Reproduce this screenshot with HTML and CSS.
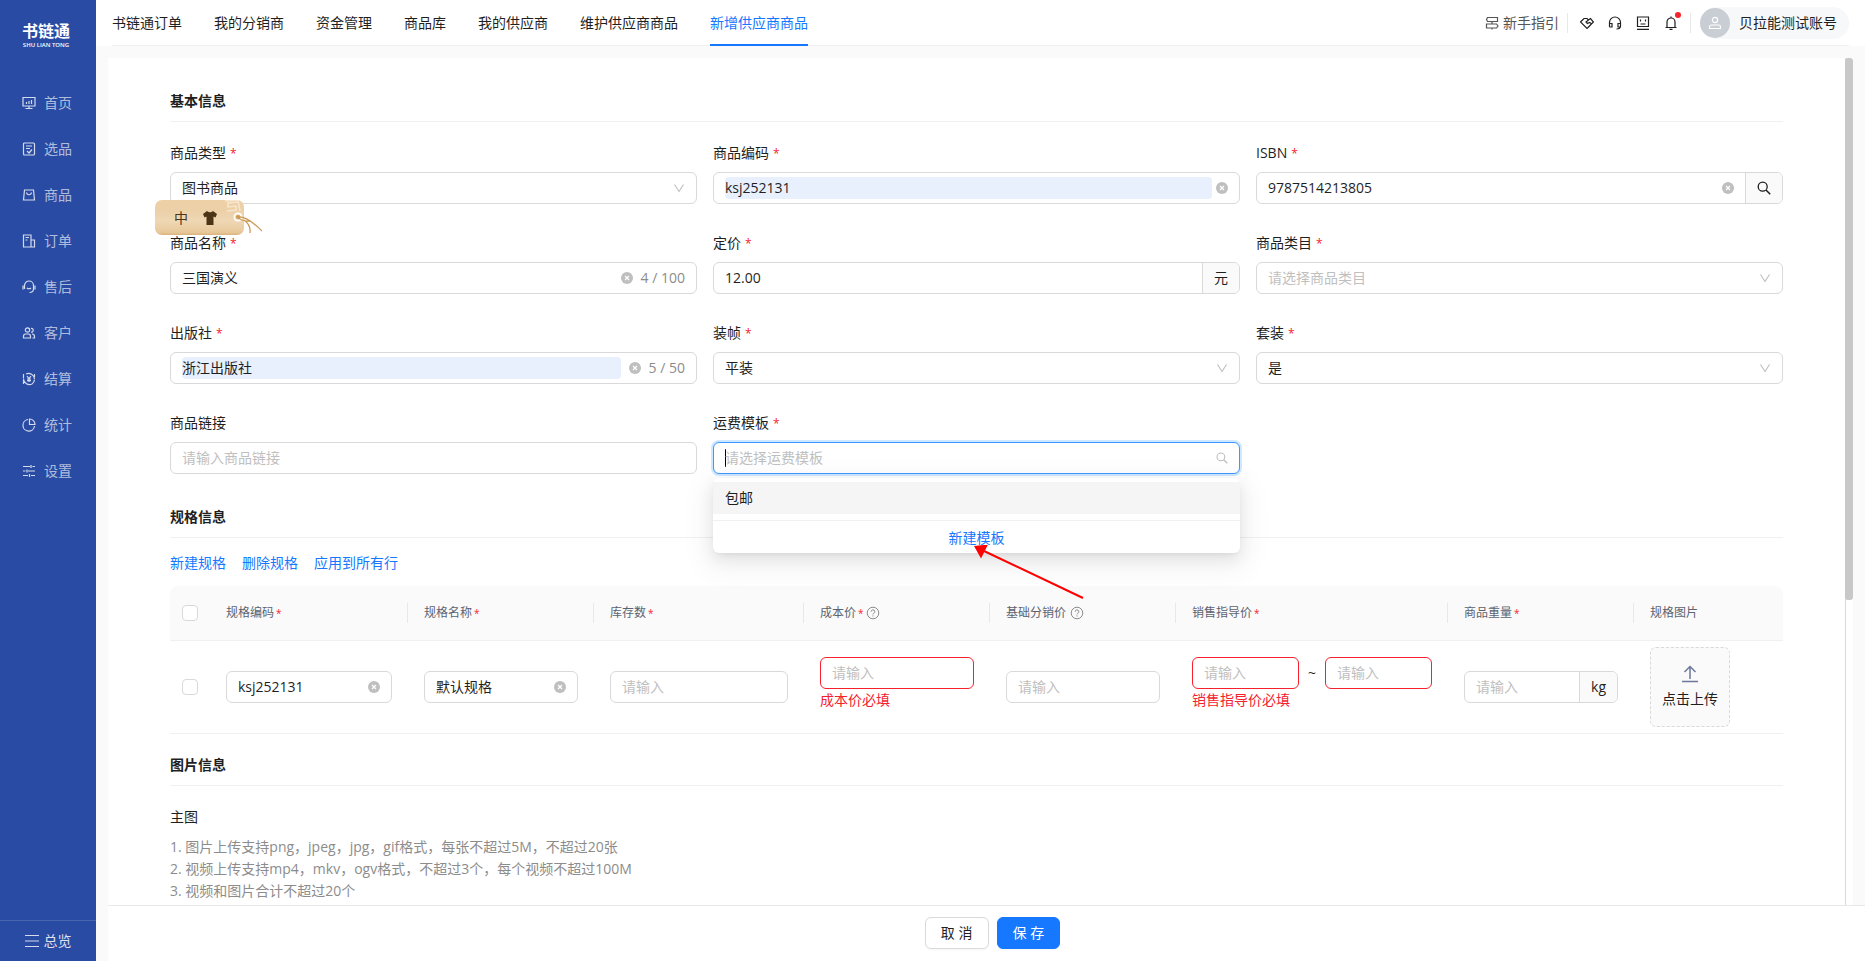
FILE: index.html
```html
<!DOCTYPE html>
<html lang="zh-CN">
<head>
<meta charset="utf-8">
<title>新增供应商商品</title>
<meta name="viewport" content="width=device-width, initial-scale=1">
<link rel="stylesheet" href="styles.css">
</head>
<body>
<svg class="sprite" aria-hidden="true">
  <symbol id="i-clear" viewBox="0 0 12 12"><circle cx="6" cy="6" r="6" fill="#bfbfbf"/><path d="M4 4l4 4M8 4l-4 4" stroke="#fff" stroke-width="1.2" fill="none"/></symbol>
  <symbol id="i-down" viewBox="0 0 12 12"><path d="M1.500 2.500l4.500 7 4.500-7" stroke="#bfbfbf" stroke-width="1.1" fill="none"/></symbol>
  <symbol id="i-search" viewBox="0 0 14 14"><circle cx="5.7" cy="5.7" r="4.5" stroke="currentColor" stroke-width="1.300" fill="none"/><path d="M9 9l4.2 4.2" stroke="currentColor" stroke-width="1.500" fill="none"/></symbol>
  <symbol id="i-help" viewBox="0 0 14 14"><circle cx="7" cy="7" r="5.8" stroke="#8c8c8c" fill="none"/><path d="M5.2 5.7a1.8 1.8 0 1 1 2.5 1.6c-.5.2-.7.4-.7 1.1M7 9.4v1.1" stroke="#8c8c8c" fill="none"/></symbol>
</svg>
<div class="app">
  <aside class="side">
    <div class="logo"><span class="logo-name">书链通</span><span class="logo-sub">SHU LIAN TONG</span></div>
    <nav class="menu" aria-label="主菜单">
      <a href="#"><svg class="ico" viewBox="0 0 14 14"><path d="M1 1.500h12v8.500H1zM7 10v2.500M3.500 12.500h7M4.500 8V6M7 8V5M9.500 8V4"/></svg>首页</a>
      <a href="#"><svg class="ico" viewBox="0 0 14 14"><rect x="1.500" y="1" width="11" height="12" rx="1"/><path d="M4 4h6M4 6.500h4M5 9l2 2 3-3.500"/></svg>选品</a>
      <a href="#"><svg class="ico" viewBox="0 0 14 14"><path d="M2.500 2h9l1 10h-11zM4.500 4.500c.5 3 4.500 3 5 0"/></svg>商品</a>
      <a href="#"><svg class="ico" viewBox="0 0 14 14"><path d="M1.500 1h7.500v12H1.500zM9 6h3.500v7H9M3.500 3.500h3.500M3.500 6h2"/></svg>订单</a>
      <a href="#"><svg class="ico" viewBox="0 0 14 14"><path d="M2.500 9V5.500a4.500 4.500 0 0 1 9 0V9c0 2.500-2 3.500-4 3.500M1 5.500v4M13 5.500v4M5 8c1 1 3 1 4 0"/></svg>售后</a>
      <a href="#"><svg class="ico" viewBox="0 0 14 14"><circle cx="5.500" cy="4" r="2.200"/><path d="M1.500 12v-1.500q0-2.500 2-2.500h3q2 0 2 2.500V12zM9 2.500a1.800 1.800 0 1 1 0 3.500M10 8q2.500 0 2.500 2.500V12h-2"/></svg>客户</a>
      <a href="#"><svg class="ico" viewBox="0 0 14 14"><path d="M4 2a6 6 0 0 1 8.500 5M1.500 7a6 6 0 0 0 8.500 5M1.500 2v4.500M12.500 2v3M1.500 8v4M12.500 7.500a6 6 0 0 1-2.500 4.500M5 4l2 2.500L9 4M7 6.500V10M5 7h4M5 8.700h4"/></svg>结算</a>
      <a href="#"><svg class="ico" viewBox="0 0 14 14"><path d="M6 1.500a5.800 5.800 0 1 0 6.500 6.500M7.500 1v5.500H13A5.500 5.500 0 0 0 7.500 1z"/></svg>统计</a>
      <a href="#"><svg class="ico" viewBox="0 0 14 14"><path d="M1 2.500h7M10.500 2.500H13M1 7h2.500M6 7h7M1 11.500h5M9 11.500h4M9 1v3M5 5.500v3M7.500 10v3"/></svg>设置</a>
    </nav>
    <a class="overview" href="#"><svg class="ico" viewBox="0 0 14 14"><path d="M0 1.500h14M0 7h14M0 12.500h14"/></svg>总览</a>
  </aside>

  <div class="main">
    <header class="top">
      <nav class="tabs" aria-label="页面">
        <a href="#">书链通订单</a><a href="#">我的分销商</a><a href="#">资金管理</a><a href="#">商品库</a><a href="#">我的供应商</a><a href="#">维护供应商商品</a><a href="#" class="on" aria-current="page">新增供应商商品</a>
      </nav>
      <div class="tools">
        <a class="guide" href="#"><svg class="ico" viewBox="0 0 14 14"><path d="M2.500 1.500H12.500V5.500H2.500L1.500 3.500zM1.500 8h10l1.500 2-1.500 2h-10zM7 5.500V8M7 12v1.500"/></svg>新手指引</a>
        <div class="icons">
          <button type="button" aria-label="合作"><svg class="ico" viewBox="0 0 14 14"><path d="M.5 6L4 2.500h3L8.500 4l2-1.500 3 3.500L7 12.500zM8.500 4L6 6l1.500 1.500 2-1L12 8M7.500 12l3-3"/></svg></button>
          <button type="button" aria-label="客服"><svg class="ico" viewBox="0 0 14 14"><path d="M1.500 11V6.500a5.500 5.500 0 0 1 11 0V10q0 3-4 3M1.500 7.500H4V11H1.500M12.500 7.500H10V11h2.500"/></svg></button>
          <button type="button" aria-label="反馈"><svg class="ico" viewBox="0 0 14 14"><path d="M1.500 1h11v9.500h-11zM1 13.300h12M4.500 3.500v2M9.500 3.500v2M4.500 8h5"/></svg></button>
          <button type="button" aria-label="通知"><svg class="ico" viewBox="0 0 14 14"><path d="M3 11V6a4 4 0 0 1 8 0v5M1.500 11.500h11M7 .5V2M5.500 13.300h3"/></svg><i class="dot"></i></button>
        </div>
        <button type="button" class="user"><span class="avatar"><svg class="ico" viewBox="0 0 14 14"><circle cx="7" cy="4" r="2.600"/><path d="M1.500 12.500v-1.500q0-2 2-2h7q2 0 2 2v1.500z"/></svg></span>贝拉能测试账号</button>
      </div>
    </header>

    <div class="page">
      <div class="view">
        <form class="card" id="goods">
          <h2>基本信息</h2>
          <div class="grid">
            <div class="field">
              <label for="type">商品类型<b>*</b></label>
              <div class="box"><select id="type"><option>图书商品</option></select><svg class="s12"><use href="#i-down"/></svg>
                <div class="ime">
                  <span>中</span>
                  <svg class="shirt" viewBox="0 0 14 14"><path d="M4 0q3 2.500 6 0l4 3-1.500 3.500-2-1V14h-7V5.500l-2 1L0 3z" fill="#4c3516"/></svg>
                  <svg class="string" viewBox="0 0 40 36"><path d="M16 2L6 3v4l8-1v4l-9 1M3 1l13-1 2 11" stroke="#f7e6cd" stroke-width="1.500" fill="none"/><circle cx="16" cy="17" r="3.500" stroke="#fff" stroke-width="2" fill="#d8a968"/><path d="M15 16q4 6 14 5M16 17q9-1 24 14M22 20q7 5 6 13" stroke="#c9964f" stroke-width="1.200" fill="none"/></svg>
                </div>
              </div>
            </div>
            <div class="field">
              <label for="code">商品编码<b>*</b></label>
              <div class="box"><input id="code" class="filled" value="ksj252131"><svg class="s12"><use href="#i-clear"/></svg></div>
            </div>
            <div class="field">
              <label for="isbn">ISBN<b>*</b></label>
              <div class="box joined"><input id="isbn" value="9787514213805"><svg class="s12"><use href="#i-clear"/></svg><button type="button" class="addon" aria-label="搜索"><svg class="s14"><use href="#i-search"/></svg></button></div>
            </div>
            <div class="field">
              <label for="name">商品名称<b>*</b></label>
              <div class="box"><input id="name" value="三国演义"><svg class="s12"><use href="#i-clear"/></svg><span class="count">4 / 100</span></div>
            </div>
            <div class="field">
              <label for="price">定价<b>*</b></label>
              <div class="box joined"><input id="price" value="12.00"><span class="addon">元</span></div>
            </div>
            <div class="field">
              <label for="cat">商品类目<b>*</b></label>
              <div class="box"><select id="cat" class="empty"><option>请选择商品类目</option></select><svg class="s12"><use href="#i-down"/></svg></div>
            </div>
            <div class="field">
              <label for="press">出版社<b>*</b></label>
              <div class="box"><input id="press" class="filled" value="浙江出版社"><svg class="s12 lead"><use href="#i-clear"/></svg><span class="count">5 / 50</span></div>
            </div>
            <div class="field">
              <label for="bind">装帧<b>*</b></label>
              <div class="box"><select id="bind"><option>平装</option></select><svg class="s12"><use href="#i-down"/></svg></div>
            </div>
            <div class="field">
              <label for="set">套装<b>*</b></label>
              <div class="box"><select id="set"><option>是</option></select><svg class="s12"><use href="#i-down"/></svg></div>
            </div>
            <div class="field">
              <label for="link">商品链接</label>
              <div class="box"><input id="link" placeholder="请输入商品链接"></div>
            </div>
            <div class="field">
              <label for="freight">运费模板<b>*</b></label>
              <div class="box focus"><input id="freight" class="caret" role="combobox" aria-expanded="true" aria-controls="freight-list" placeholder="请选择运费模板"><svg class="s12 muted"><use href="#i-search"/></svg>
                <div class="drop">
                  <div id="freight-list" role="listbox"><div class="opt" role="option" aria-selected="false">包邮</div></div>
                  <a class="create" href="#">新建模板</a>
                  <svg class="arrow" viewBox="0 0 110 56"><path d="M10 6l99 47" stroke="#f00" stroke-width="2"/><path d="M0 1l14-1.500L7 13.500z" fill="#f00"/></svg>
                </div>
              </div>
            </div>
          </div>

          <h2 class="spec">规格信息</h2>
          <div class="links"><a href="#">新建规格</a><a href="#">删除规格</a><a href="#">应用到所有行</a></div>
          <table>
            <colgroup><col class="w40"><col class="w198"><col class="w186"><col class="w210"><col class="w186"><col class="w186"><col class="w272"><col class="w186"><col class="w149"></colgroup>
            <thead>
              <tr>
                <th class="tick"><input type="checkbox" aria-label="全选"></th>
                <th><span>规格编码<b>*</b></span></th>
                <th><span>规格名称<b>*</b></span></th>
                <th><span>库存数<b>*</b></span></th>
                <th><span>成本价<b>*</b><svg class="s14"><use href="#i-help"/></svg></span></th>
                <th><span>基础分销价<svg class="s14 gap"><use href="#i-help"/></svg></span></th>
                <th><span>销售指导价<b>*</b></span></th>
                <th><span>商品重量<b>*</b></span></th>
                <th><span>规格图片</span></th>
              </tr>
            </thead>
            <tbody>
              <tr>
                <td class="tick"><input type="checkbox" aria-label="选择此行"></td>
                <td><div class="box"><input aria-label="规格编码" value="ksj252131"><svg class="s12"><use href="#i-clear"/></svg></div></td>
                <td><div class="box"><input aria-label="规格名称" value="默认规格"><svg class="s12"><use href="#i-clear"/></svg></div></td>
                <td><div class="box"><input aria-label="库存数" placeholder="请输入"></div></td>
                <td><div class="check"><div class="box bad"><input aria-label="成本价" placeholder="请输入"></div><p>成本价必填</p></div></td>
                <td><div class="box"><input aria-label="基础分销价" placeholder="请输入"></div></td>
                <td><div class="check"><div class="range"><div class="box bad"><input aria-label="最低销售指导价" placeholder="请输入"></div><span>~</span><div class="box bad"><input aria-label="最高销售指导价" placeholder="请输入"></div></div><p>销售指导价必填</p></div></td>
                <td><div class="box joined"><input aria-label="商品重量" placeholder="请输入"><span class="addon">kg</span></div></td>
                <td><button type="button" class="upload"><svg viewBox="0 0 16 18"><path d="M8 14V2M2.500 7L8 1.500 13.500 7M0 16.500h16" stroke="#6b7a99" stroke-width="1.500" fill="none"/></svg>点击上传</button></td>
              </tr>
            </tbody>
          </table>

          <h2 class="pics">图片信息</h2>
          <h3>主图</h3>
          <p class="tips">1. 图片上传支持png，jpeg，jpg，gif格式，每张不超过5M，不超过20张<br>2. 视频上传支持mp4，mkv，ogv格式，不超过3个，每个视频不超过100M<br>3. 视频和图片合计不超过20个</p>
        </form>
        <div class="track"><div class="thumb"></div></div>
      </div>
      <footer class="foot"><button type="button" class="btn">取 消</button><button type="submit" form="goods" class="btn primary">保 存</button></footer>
    </div>
  </div>
</div>
</body>
</html>
```
FILE: styles.css
```css
* { box-sizing: border-box; }
body { margin: 0; font: 14px/22px "Open Sans", "Noto Sans CJK SC", sans-serif; color: #1f1f1f; background: #fafafa; }
a { color: inherit; text-decoration: none; }
button, input, select { font: inherit; color: inherit; margin: 0; }
h2, h3, p { margin: 0; font-size: 14px; }
svg { flex: none; display: block; }
.sprite { position: absolute; width: 0; height: 0; }
.ico { width: 14px; height: 14px; fill: none; stroke: currentColor; stroke-width: 1.2; }
.s12 { width: 12px; height: 12px; }
.s14 { width: 14px; height: 14px; }
.app { display: flex; height: 100vh; }

.side { flex: none; width: 96px; background: #294ba3; color: rgba(255,255,255,.65); display: flex; flex-direction: column; }
.side .ico { color: rgba(255,255,255,.8); }
.logo { padding: 20px 4px 0 0; height: 80px; color: #fff; display: flex; flex-direction: column; align-items: center; }
.logo-name { font-size: 16px; line-height: 22px; font-weight: 700; }
.logo-sub { font-size: 6px; line-height: 6px; font-weight: 600; }
.menu { flex: 1; }
.menu a { height: 46px; padding-left: 22px; display: flex; align-items: center; gap: 8px; }
.overview { height: 41px; border-top: 1px solid rgba(255,255,255,.15); color: rgba(255,255,255,.85); display: flex; align-items: center; justify-content: center; gap: 5px; }

.main { flex: 1; min-width: 0; display: flex; flex-direction: column; }
.top { height: 46px; padding: 0 16px; background: #fff; display: flex; }
.tabs { flex: 1; display: flex; gap: 32px; border-bottom: 1px solid #f0f0f0; }
.tabs a { line-height: 46px; height: 46px; white-space: nowrap; }
.tabs .on { color: #1677ff; border-bottom: 2px solid #1677ff; }
.tools { display: flex; align-items: center; border-bottom: 1px solid #f0f0f0; }
.guide { display: flex; align-items: center; gap: 4px; padding-right: 8px; color: #555; }
.icons { display: flex; align-items: center; height: 20px; padding: 0 12px; gap: 14px; border: solid #e8e8e8; border-width: 0 1px; }
.icons button { position: relative; width: 14px; padding: 0; border: 0; background: none; display: flex; justify-content: center; }
.dot { position: absolute; right: -3px; top: -4px; width: 6px; height: 6px; border-radius: 50%; background: #f5222d; }
.user { display: flex; align-items: center; gap: 9px; height: 32px; margin-left: 9px; padding: 0 12px 0 0; border: 0; border-radius: 16px; background: #f7f8fa; }
.avatar { width: 30px; height: 30px; border-radius: 50%; background: #c9cdd4; color: #fff; display: flex; align-items: center; justify-content: center; }

.page { flex: 1; min-height: 0; padding: 12px 0 0 12px; display: flex; flex-direction: column; }
.view { flex: 1; min-height: 0; margin-right: 12px; background: #fff; display: flex; overflow: hidden; }
.card { flex: 1; min-width: 0; padding: 32px 62px 0; }
.track { flex: none; width: 8px; border-left: 1px solid #d9d9d9; }
.thumb { width: 8px; height: 64%; margin-left: -1px; border-radius: 3px; background: #c8c8c8; }
h2 { padding-bottom: 9px; border-bottom: 1px solid #f0f0f0; font-weight: 700; }
.grid { display: grid; grid-template-columns: repeat(3, 1fr); gap: 28px 16px; padding: 20px 0 32px; }
.field { min-width: 0; }
label { display: block; margin-bottom: 8px; }
b { margin-left: 4px; font-size: 12px; line-height: 1; color: #f5222d; font-weight: 400; }
.box { position: relative; display: flex; align-items: center; height: 32px; padding: 0 11px; border: 1px solid #d9d9d9; border-radius: 6px; background: #fff; }
.box > input, .box > select { flex: 1; width: 0; min-width: 0; height: 22px; padding: 0; border: 0; outline: 0; background: none; appearance: none; border-radius: 4px; }
.box > .filled { background: #e8f0fe; }
.box > .s12 { margin-left: 4px; }
.box > .lead { margin-left: 8px; }
.box > .empty, .box > input::placeholder { color: #bfbfbf; }
.box > .caret { background: linear-gradient(#000, #000) left center / 1px 18px no-repeat; }
.muted { color: #bfbfbf; }
.count { margin-left: 8px; color: #8c8c8c; }
.joined { padding-right: 0; }
.addon { align-self: stretch; display: flex; align-items: center; padding: 0 11px; margin-left: 11px; border: 0; border-left: 1px solid #d9d9d9; border-radius: 0 5px 5px 0; background: #fafafa; }
.focus { border-color: #4096ff; box-shadow: 0 0 0 2px rgba(5,145,255,.2); }
.bad { border-color: #f5222d; }
.drop { position: absolute; z-index: 2; left: -1px; right: -1px; top: 35px; padding-top: 4px; border-radius: 6px; background: #fff; box-shadow: 0 6px 16px rgba(0,0,0,.08), 0 3px 6px -4px rgba(0,0,0,.12), 0 9px 28px 8px rgba(0,0,0,.05); }
.opt { padding: 5px 12px; background: #f5f5f5; }
.create { display: block; margin-top: 6px; padding: 6px 5px 4px; border-top: 1px solid #f0f0f0; text-align: center; color: #1677ff; }
.arrow { position: absolute; left: calc(50% - 3px); top: 67px; width: 110px; height: 56px; }
.ime { position: absolute; z-index: 1; left: -16px; top: 27px; width: 89px; height: 35px; padding-left: 19px; display: flex; align-items: center; gap: 15px; border-radius: 7px; color: #4c3516; background: linear-gradient(#efd0a6, #ecd0a8 30%, #efd8b5 60%, #e8c89a 92%, #d8b27c); }
.shirt { width: 14px; height: 14px; }
.string { position: absolute; left: 67px; top: 0; width: 40px; height: 36px; }

.links { display: flex; gap: 16px; padding: 14px 0 12px; color: #1677ff; }
table { width: 100%; table-layout: fixed; border-collapse: separate; border-spacing: 0; }
.w40 { width: 40px; } .w149 { width: 149px; } .w186 { width: 186px; } .w198 { width: 198px; } .w210 { width: 210px; } .w272 { width: 272px; }
th { height: 55px; padding: 0; background: #fafafa; border-bottom: 1px solid #f0f0f0; font-size: 12px; font-weight: 400; text-align: left; color: #5c6370; }
th:first-child { border-radius: 8px 0 0; }
th:last-child { border-radius: 0 8px 0 0; }
th > span { display: flex; align-items: center; height: 20px; padding-left: 16px; border-right: 1px solid #e8e8e8; }
th:last-child > span { border-right: 0; }
th b { margin: 0 2px; font-size: 10px; }
.gap { margin-left: 4px; }
td { padding: 6px 16px; border-bottom: 1px solid #f0f0f0; }
.tick { padding: 0; text-align: center; }
.tick input { display: block; width: 16px; height: 16px; margin: 0 auto; appearance: none; border: 1px solid #d9d9d9; border-radius: 4px; background: #fff; }
.check { padding-bottom: 6px; color: #f5222d; }
.check .box { color: #1f1f1f; }
.range { display: flex; align-items: center; color: #1f1f1f; }
.range .box { flex: 1; min-width: 0; }
.range > span { width: 26px; text-align: center; }
.upload { width: 80px; height: 80px; padding: 0; border: 1px dashed #d9d9d9; border-radius: 6px; background: #fafafa; display: flex; flex-direction: column; align-items: center; justify-content: center; gap: 5px; }
.upload svg { width: 16px; height: 18px; }
.pics { margin-top: 20px; }
h3 { margin: 20px 0 8px; font-weight: 400; }
.tips { color: #8c8c8c; }
.foot { flex: none; height: 56px; padding: 0 0 2px 12px; background: #fff; border-top: 1px solid #e8e8e8; display: flex; align-items: center; justify-content: center; gap: 8px; }
.btn { height: 32px; padding: 0 15px; border: 1px solid #d9d9d9; border-radius: 6px; background: #fff; box-shadow: 0 2px 0 rgba(0,0,0,.02); }
.primary { color: #fff; background: #1677ff; border-color: #1677ff; }
```
